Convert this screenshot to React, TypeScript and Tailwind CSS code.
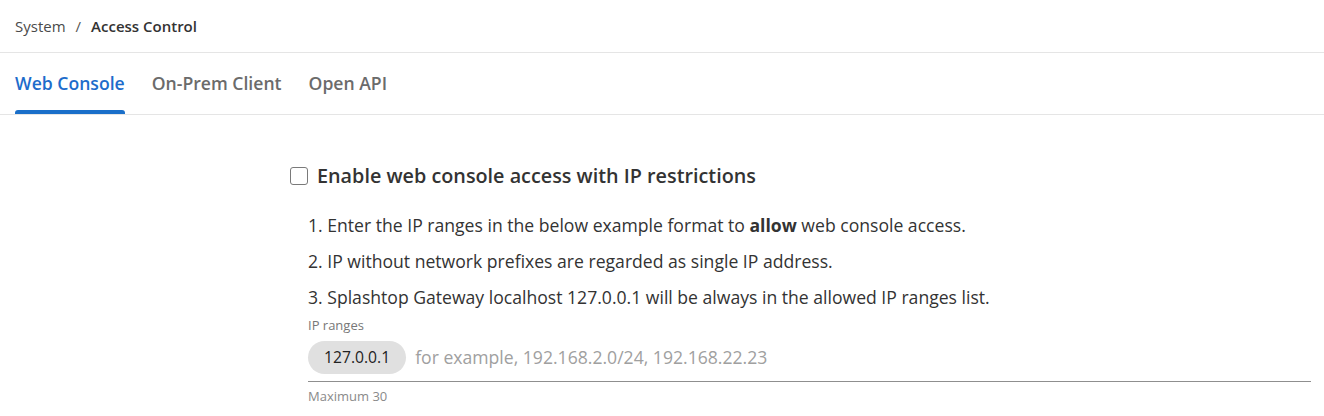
import React from "react";

export default function App() {
  const font = { fontFamily: '"Open Sans", "Noto Sans", sans-serif' };
  return (
    <div className="w-[1324px] h-[416px] bg-white overflow-hidden text-[#333]" style={font}>
      <div className="h-[53px] flex items-center px-[15px] border-b border-[#e5e5e5] text-[15px]">
        <span className="text-[#4a4a4a]">System</span>
        <span className="mx-[10px] text-[#555]">/</span>
        <span className="font-semibold text-[#333]">Access Control</span>
      </div>
      <div className="h-[62px] flex items-end gap-[27px] px-[15px] border-b border-[#e5e5e5]">
        <div className="h-full flex flex-col justify-between">
          <div className="pt-[17px] text-[17.6px] font-semibold text-[#1d6ccb] leading-[26px]">Web Console</div>
          <div className="h-[4px] bg-[#1a6fc9] rounded-t-[3px]" />
        </div>
        <div className="h-full pt-[17px] text-[17.6px] font-semibold text-[#6b6b6b] leading-[26px]">On-Prem Client</div>
        <div className="h-full pt-[17px] text-[17.6px] font-semibold text-[#6b6b6b] leading-[26px]">Open API</div>
      </div>
      <div className="pl-[290px] pr-[13px] pt-[49px]">
        <label className="flex items-center h-[24px]">
          <span className="w-[18px] h-[18px] border-[1.5px] border-[#7a7a7a] rounded-[3px] bg-white mr-[9px]" />
          <span className="text-[19.8px] font-semibold text-[#333] leading-[24px]">Enable web console access with IP restrictions</span>
        </label>
        <div className="pl-[18px] pt-[25px] text-[17.6px] text-[#333]">
          <div className="h-[36px] leading-[24px]">1. Enter the IP ranges in the below example format to <b className="font-bold">allow</b> web console access.</div>
          <div className="h-[36px] leading-[24px]">2. IP without network prefixes are regarded as single IP address.</div>
          <div className="h-[31px] leading-[24px]">3. Splashtop Gateway localhost 127.0.0.1 will be always in the allowed IP ranges list.</div>
          <div className="text-[13px] text-[#777] leading-[18px] h-[18px]">IP ranges</div>
          <div className="border-b border-[#8f8f8f] flex items-center pt-[7px] pb-[7px]">
            <span className="h-[33px] px-[16px] rounded-full bg-[#e0e0e0] flex items-center text-[15.7px] text-[#222]">127.0.0.1</span>
            <span className="ml-[9px] text-[17.6px] text-[#a0a0a0]">for example, 192.168.2.0/24, 192.168.22.23</span>
          </div>
          <div className="pt-[5px] text-[13px] text-[#8a8a8a] leading-[18px]">Maximum 30</div>
        </div>
      </div>
    </div>
  );
}
